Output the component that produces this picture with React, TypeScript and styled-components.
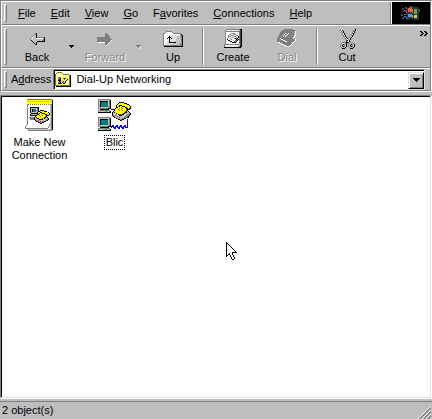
import React from "react";
import styled, { createGlobalStyle, css } from "styled-components";

const GlobalStyle = createGlobalStyle`
  * { box-sizing: border-box; }
  body {
    margin: 0;
    background: #bebebe;
    color: #000;
    font: 11px/13px "Liberation Sans", Arial, sans-serif;
  }
  button, input { font: inherit; color: inherit; }
`;

const ridge = css`
  border-bottom: 1px solid #808080;
  box-shadow: inset 0 1px #fff;
`;

const Window = styled.div`
  display: flex;
  flex-direction: column;
  min-height: 100vh;
  position: relative;
`;

const Bands = styled.header`
  margin-right: 1px;
  border: 1px solid #808080;
  border-bottom: 0;
  box-shadow: 1px 1px #fff;
`;

const Band = styled.div<{ $height: number }>`
  ${ridge}
  display: flex;
  align-items: stretch;
  height: ${(p) => p.$height}px;
  border-left: 1px solid #fff;
  padding-top: 1px;
`;

const Grip = styled.span`
  flex: none;
  width: 3px;
  margin: 2px 3px 2px 2px;
  border: 1px solid;
  border-color: #fff #808080 #808080 #fff;
`;

const Menu = styled.nav`
  display: flex;
  flex: 1;
  align-items: center;
  gap: 15px;
  padding-left: 8px;
`;

const MenuItem = styled.button`
  padding: 0;
  border: 0;
  background: none;
`;

const Brand = styled.div`
  display: flex;
  align-items: center;
  justify-content: center;
  width: 39px;
  background: #000;
  border-left: 1px solid #fff;
  box-shadow: -1px 0 #808080;
`;

const Tools = styled.div`
  display: flex;
  flex: 1;
  align-items: stretch;
  padding-right: 2px;
`;

const ToolButton = styled.button`
  display: flex;
  flex-direction: column;
  align-items: center;
  gap: 1px;
  width: 54px;
  padding: 2px 0 0;
  border: 0;
  background: none;
  line-height: 14px;

  &:disabled {
    color: #868686;
    text-shadow: 1px 1px #fff;
  }
`;

const DropButton = styled.button`
  display: flex;
  align-items: center;
  justify-content: center;
  width: 14px;
  padding: 0;
  border: 0;
  background: none;
`;

const Divider = styled.span`
  width: 2px;
  margin: 2px;
  border-left: 1px solid #808080;
  border-right: 1px solid #fff;
`;

const MoreButton = styled.button`
  align-self: flex-start;
  margin-left: auto;
  padding: 5px 0;
  border: 0;
  background: none;
  line-height: 0;
`;

const AddressLabel = styled.label`
  align-self: center;
  margin: 0 2px 0 1px;
  white-space: nowrap;
`;

const AddressBox = styled.div`
  display: flex;
  flex: 1;
  align-items: center;
  min-width: 0;
  margin-right: 5px;
  padding-left: 1px;
  background: #fff;
  border: 1px solid;
  border-color: #808080 #dfdfdf #dfdfdf #808080;
  box-shadow: inset 1px 1px #000;
`;

const AddressInput = styled.input`
  flex: 1;
  min-width: 0;
  margin-left: 5px;
  padding: 0;
  border: 0;
  outline: 0;
  background: none;
`;

const ComboButton = styled.button`
  display: flex;
  align-items: center;
  justify-content: center;
  width: 16px;
  height: 17px;
  margin-top: 1px;
  padding: 0;
  background: #bebebe;
  border: 1px solid;
  border-color: #dfdfdf #000 #000 #dfdfdf;
  box-shadow: inset 1px 1px #fff, inset -1px -1px #808080;
`;

const Files = styled.main`
  display: flex;
  flex: 1;
  align-items: flex-start;
  margin: 4px 1px 0 0;
  padding: 1px 0 0 1px;
  background: #fff;
  border: 1px solid;
  border-color: #808080 #dfdfdf #dfdfdf #808080;
  box-shadow: inset 1px 1px #000, 1px 1px #fff;
`;

const FileItem = styled.button`
  display: flex;
  flex-direction: column;
  align-items: center;
  width: 75px;
  padding: 2px 0 0;
  border: 0;
  background: none;
`;

const FileLabel = styled.span<{ $focused?: boolean }>`
  margin-top: 3px;
  padding: 0 1px;
  border: 1px dotted ${(p) => (p.$focused ? "#000" : "transparent")};
`;

const Status = styled.footer`
  display: flex;
  align-items: center;
  justify-content: space-between;
  height: 18px;
  margin-top: 3px;
  padding-left: 2px;
  border-top: 1px solid #808080;
`;

const Pointer = styled.svg`
  position: absolute;
  left: 226px;
  top: 242px;
  pointer-events: none;
`;

type Palette = Record<string, string>;

const inks: Palette = {
  k: "#000000", w: "#ffffff", g: "#808080", s: "#c0c0c0", l: "#dfdfdf",
  d: "#404040", y: "#ffff00", o: "#808000", c: "#ffff99", p: "#ffffc8",
  t: "#008080", r: "#ff0000", e: "#00e000", n: "#203880",
};

function Pixels({ rows }: { rows: string[] }) {
  const runs: React.ReactNode[] = [];
  rows.forEach((row, y) => {
    let x = 0;
    while (x < row.length) {
      let end = x + 1;
      while (row[end] === row[x]) end++;
      if (inks[row[x]]) {
        runs.push(<rect key={`${x}-${y}`} x={x} y={y} width={end - x} height={1} fill={inks[row[x]]} />);
      }
      x = end;
    }
  });
  return <g shapeRendering="crispEdges">{runs}</g>;
}

function Icon({ rows, width, height, x = 0, y = 0 }: {
  rows: string[]; width: number; height: number; x?: number; y?: number;
}) {
  return (
    <svg width={width} height={height} viewBox={`${-x} ${-y} ${width} ${height}`} aria-hidden="true">
      <Pixels rows={rows} />
    </svg>
  );
}

const backArrow = [
  ".....gk........",
  "....gsk........",
  "...gssk........",
  "..gwssk........",
  ".gwssskgggggggk",
  "gwwssswwwwwwwsk",
  "gssssssssssssgk",
  ".kssssssssssggk",
  "..ksssskkkkkkkk",
  "...kssk........",
  "....ksk........",
  ".....kk........",
];

const forwardArrow = [
  "........gg.......",
  "........ggg......",
  "........gggg.....",
  "........ggggg....",
  "ggggggggggggg....",
  "gggggggggggggg...",
  "ggggggggggggggg..",
  "ggggggggggggggw..",
  "gggggggggggggw...",
  ".wwwwwwwggggw....",
  "........gggw.....",
  "........ggw......",
  ".........w.......",
];

const upFolder = [
  "...gggggg...........",
  "..gwwwwwwg..........",
  "ggwwwwwwwwgggggggg..",
  "gwwwwwwwwwwwwwwwwgk.",
  "gwwwwwlllllllllllsgk",
  "gwwwwwkllllllllssggk",
  "gwwwwkkkllllllssssgk",
  "gwwwkwkwklllllssssgk",
  "gwwwwwkllllllsssssgk",
  "gwwwwlkllllllsssssgk",
  "gwwwllkllllsssssssgk",
  "gwwlllkkkkkkksssssgk",
  "gwwlllllllsssssssggk",
  "gwlllllssssssssssggk",
  "gggggggggggggggggggk",
  ".kkkkkkkkkkkkkkkkkkk",
];

const createPad = [
  "..ggggggggggggggkk",
  ".gwlwlwlwlwlwlwgdk",
  ".gggggggggggggggdk",
  ".gwwwwwwwwwwwwwgdk",
  ".gwwwwwggggwwwwgdk",
  ".gwwwggwllggwwwgdk",
  ".gwwgwlgggwwggwgdk",
  ".gwwgggwwlggwlkgdk",
  ".gwwgwwlglwlgwkgdk",
  ".gwgwlglwwgkgkwgdk",
  ".gwkwwlglwwlkgkgdk",
  ".gwwkkwwlllggkwgdk",
  ".gwwwwkkwlggkwwgdk",
  ".gwwwwwwkkkkwwwgdk",
  ".gwwwwwwwwwwwwwgdk",
  "gggggggggggggggsdk",
  "gwwwwwwwwwwwwwssdk",
  "gllllllllllllssgkk",
  "kkkkkkkkkkkkkkkkk.",
];

const dialPhone = [
  ".......ggggggggg....",
  ".....gggggggggggggg.",
  "....ggggggggggggggw.",
  "...gggggggggggggggw.",
  "...gggggwggwgggggw..",
  "..gggggwggwgggggggw.",
  "..ggggwggwgggggggww.",
  ".gggggwgwggggggggw..",
  ".gggggggggggggggww..",
  "gggwggggggggggggwg..",
  "ggggwwggggggggggggw.",
  "ggggggwwggggggggggw.",
  "ggggggggwwgggggggw..",
  ".wwggggggggggggww...",
  "...wwggggggggggw....",
  ".....wwgggggggw.....",
  ".......wwggggw......",
  ".........wwww.......",
];

const scissors = [
  "gw............gk",
  "gsk..........gsk",
  ".gwk.........gk.",
  ".gsk........gwk.",
  "..gwk.......gk..",
  "..gsk......gwk..",
  "...gwk.....gk...",
  "...gsk....gwk...",
  "....gwk..gsk....",
  ".....gskgwk.....",
  ".....gswgsk.....",
  "......gkwk......",
  "......kswk......",
  "..ggggkkksggg...",
  ".gsssgk..gsssg..",
  "gsgkgsk.gsgkgsk.",
  "gsk.gsk.gsk.gsk.",
  "gsgkgsk.gsgkgsk.",
  ".gsssk...gsssk..",
  "..kkk.....kkk...",
];

const pageFolder = [
  "..ooooo.........",
  ".opppppo........",
  "opppppppoooooo..",
  "opppppppppppppok",
  "opcccccccccccpok",
  "opcgggccyyyycpok",
  "opcgtkcyokoyypok",
  "opcgtkcyyoyykpok",
  "opckkkcsyyykcpok",
  "opccnnssrskccpok",
  "opcgtkcksskccpok",
  "opckkkrckkcccpok",
  "opcccccccccccpok",
  "oooooooooooooook",
  ".kkkkkkkkkkkkkkk",
];

const computer = [
  "gggggggggggg.",
  "gssssssssssgk",
  "gskkkkkkkksgk",
  "gsktttttttsgk",
  "gsktttttttsgk",
  "gsktttttttsgk",
  "gsktttttttsgk",
  "gsktttttttsgk",
  "gsssssssssggk",
  "ggggggggggkkk",
  "..kkkkkkkkk..",
  "gggggggggggg.",
  "gsssssseessgk",
  "kkkkkkkkkkkkk",
];

const smallComputer = [
  "kkkkkkkkk",
  "kssssssgk",
  "ksktttsgk",
  "ksktttsgk",
  "ksktttsgk",
  "kssssssgk",
  ".kkkkkkk.",
  "kssssssgk",
  "kkkkkkkkk",
];

const phone = [
  ".......kkkkk.......",
  "......kyyyyykkk....",
  ".....kyyyyyyyyykk..",
  "....kyykkkyyyyyyyk.",
  "....kyokyykkkyyyyyk",
  "....kkyyyoyyykkyyyk",
  "...kyyyoyyoyyykkykk",
  "..kyyyoyyoyyyyokkk.",
  "..kyyyyoyyoyyyok...",
  ".kyyyyyyyyyyyoksk..",
  "kskyyyyyyyyyokkssk.",
  "kssskyyyyyookssssgk",
  "kslssskoookksssgggk",
  "kgsrssskkkssssgggk.",
  ".kgssrsssssssgggk..",
  "..kggssrssssgggkk..",
  "....kggsssggkk.....",
  "......kkggkk.......",
  "........kk.........",
];

const smallPhone = [
  "......kkkk......",
  "....kkyyyykkk...",
  "...kyykkyyyyyyk.",
  "...kykyykkkyyyyk",
  "...kkyyoyyykkyyk",
  "..kyyoyyoyyykkk.",
  ".kyyyyoyyyyok...",
  "kskyyyyyyyokgk..",
  "ksskkyyyookssgk.",
  "kgssskkkksssggk.",
  ".kgsrssssssggk..",
  "..kkgsrsggkk....",
  "....kkggkk......",
  "......kk........",
];

const chevron = [
  "kk..kk..",
  ".kk..kk.",
  "..kk..kk",
  ".kk..kk.",
  "kk..kk..",
];

const downArrow = ["kkkkkkk", ".kkkkk.", "..kkk..", "...k..."];
const smallArrow = ["kkkkk", ".kkk.", "..k.."];
const dimArrow = ["ggggg.", ".gggw.", "..gw..", "...w.."];

const cursor = [
  "k...........",
  "kk..........",
  "kwk.........",
  "kwwk........",
  "kwwwk.......",
  "kwwwwk......",
  "kwwwwwk.....",
  "kwwwwwwk....",
  "kwwwwwwwk...",
  "kwwwwwwwwk..",
  "kwwwwwkkkkk.",
  "kwwkwwk.....",
  "kwkkwwk.....",
  "kk..kwwk....",
  "k...kwwk....",
  ".....kwwk...",
  ".....kwwk...",
  "......kk....",
];

function WindowsLogo() {
  return (
    <svg width="22" height="18" viewBox="0 0 22 18" role="img" aria-label="Windows" shapeRendering="crispEdges">
      <path d="M7 4h2V2h4v1h5v1h1v12h-5v-1H9v1H7z" fill="#293836" />
      <path d="M2 4h2v2H2zM5 3h2v2H5zM2 7h2v1H2zM5 6h2v2H5z" fill="#74343d" />
      <path d="M1 10h2v2H1zM4 10h3v1H4zM2 13h2v2H2zM5 12h2v2H5z" fill="#344e78" />
      <path d="M8 4h4v1h1v4h-1V8H8z" fill="#dd6548" />
      <path d="M4 6h1v1H4zM6 8h1v1H6z" fill="#d87454" />
      <path d="M14 5h3v5h-3z" fill="#62a555" />
      <path d="M8 10h4v1h1v3h-1v-1H8z" fill="#5c9be0" />
      <path d="M14 11h3v3h-3z" fill="#efc540" />
      <path d="M9 3h3v1H9zM19 5h1v3h-1z" fill="#68574b" />
      <path d="M4 12h1v1H4zM6 14h1v1H6z" fill="#638bc5" />
    </svg>
  );
}

function NotepadIcon() {
  return (
    <svg width="29" height="33" viewBox="0 0 29 33" shapeRendering="crispEdges" aria-hidden="true">
      <path d="M26 1h2v30h-1v1H3v-1h23z" fill="#000" />
      <path d="M2 1h24v24l-1 5H0v-2l2-3z" fill="#fff" />
      <path d="M2 1h1v25H2zM1 26h1v1H1zM0 27h1v3H0zM0 29h23v1H0zM23 27h1v2h-1zM24 25h1v2h-1zM3 31h23V4h1v28H3z" fill="#808080" />
      <path d="M2 30h24v1H2zM25 4h1v26h-1z" fill="#c0c0c0" />
      <path d="M2 1h25v4H2z" fill="#ffff00" />
      <path d="M2 .5h25" stroke="#808000" />
      <path d="M3 2.5h23" stroke="#c0a800" strokeDasharray="1 1" />
      <path d="M3 5.5h23" stroke="#808000" strokeDasharray="1 1" />
      <g transform="translate(5 8)"><Pixels rows={smallComputer} /></g>
      <path d="M4 18h6v1H4zM5 19h5v2H5z" fill="#808080" />
      <g transform="translate(9 11)"><Pixels rows={smallPhone} /></g>
    </svg>
  );
}

function DialUpIcon() {
  return (
    <svg width="33" height="33" viewBox="0 0 33 33" shapeRendering="crispEdges" aria-hidden="true">
      <path d="M13 10.5h4M29.5 20v8h-2" fill="none" stroke="#0000ff" />
      <path d="M13 28.5l1-1 1-1 1 2 1 1 1-2 1-1 1 2 1 1 1-2 1-1 1 2 1 1 1-2 1-1 1 2h2" fill="none" stroke="#0000ff" />
      <Pixels rows={computer} />
      <g transform="translate(0 18)"><Pixels rows={computer} /></g>
      <g transform="translate(14 3)"><Pixels rows={phone} /></g>
    </svg>
  );
}

function SizeGrip() {
  return (
    <svg width="14" height="16" viewBox="0 0 14 16" aria-hidden="true" shapeRendering="crispEdges">
      {[0, 4, 8].map((n) => (
        <g key={n}>
          <path d={`M${n} 16L13 ${3 + n}`} stroke="#fff" />
          <path d={`M${n + 1} 16L13 ${4 + n}M${n + 2} 16L13 ${5 + n}`} stroke="#808080" />
        </g>
      ))}
    </svg>
  );
}

const menus: [string, string, string][] = [
  ["", "F", "ile"], ["", "E", "dit"], ["", "V", "iew"], ["", "G", "o"],
  ["F", "a", "vorites"], ["", "C", "onnections"], ["", "H", "elp"],
];

function Tool({ label, rows, x, y, disabled }: {
  label: string; rows: string[]; x: number; y: number; disabled?: boolean;
}) {
  return (
    <ToolButton disabled={disabled}>
      <Icon rows={rows} width={20} height={21} x={x} y={y} />
      {label}
    </ToolButton>
  );
}

export default function App() {
  return (
    <>
      <GlobalStyle />
      <Window>
        <Bands>
          <Band $height={24}>
            <Grip />
            <Menu aria-label="Main menu">
              {menus.map(([before, key, after]) => (
                <MenuItem key={key + after}>{before}<u>{key}</u>{after}</MenuItem>
              ))}
            </Menu>
            <Brand><WindowsLogo /></Brand>
          </Band>
          <Band $height={43}>
            <Grip />
            <Tools role="toolbar" aria-label="Standard buttons">
              <Tool label="Back" rows={backArrow} x={3} y={5} />
              <DropButton aria-label="Back history"><Icon rows={smallArrow} width={5} height={3} /></DropButton>
              <Tool label="Forward" rows={forwardArrow} x={2} y={5} disabled />
              <DropButton aria-label="Forward history" disabled><Icon rows={dimArrow} width={6} height={4} /></DropButton>
              <Tool label="Up" rows={upFolder} x={0} y={3} />
              <Divider />
              <Tool label="Create" rows={createPad} x={1} y={1} />
              <Tool label="Dial" rows={dialPhone} x={0} y={1} disabled />
              <Divider />
              <Tool label="Cut" rows={scissors} x={3} y={1} />
              <MoreButton aria-label="More buttons"><Icon rows={chevron} width={8} height={5} /></MoreButton>
            </Tools>
          </Band>
          <Band $height={23}>
            <Grip />
            <AddressLabel htmlFor="address">A<u>d</u>dress</AddressLabel>
            <AddressBox>
              <Icon rows={pageFolder} width={16} height={15} />
              <AddressInput id="address" defaultValue="Dial-Up Networking" />
              <ComboButton aria-label="Show addresses"><Icon rows={downArrow} width={7} height={4} /></ComboButton>
            </AddressBox>
          </Band>
        </Bands>
        <Files>
          <FileItem>
            <NotepadIcon />
            <FileLabel>Make New Connection</FileLabel>
          </FileItem>
          <FileItem>
            <DialUpIcon />
            <FileLabel $focused>Blic</FileLabel>
          </FileItem>
        </Files>
        <Status>
          <span>2 object(s)</span>
          <SizeGrip />
        </Status>
        <Pointer width="12" height="18" viewBox="0 0 12 18" aria-hidden="true"><Pixels rows={cursor} /></Pointer>
      </Window>
    </>
  );
}
